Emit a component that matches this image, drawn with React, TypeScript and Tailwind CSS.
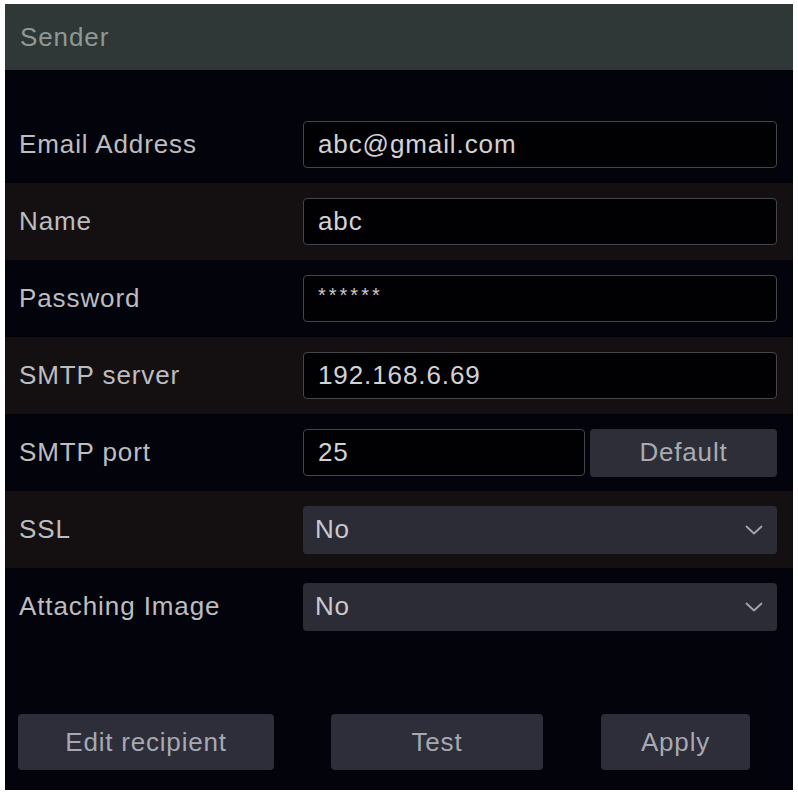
import React from "react";

const font = { fontFamily: '"Liberation Sans", Arial, sans-serif' };

function Chevron() {
  return (
    <svg width="18" height="10" viewBox="0 0 18 10" className="mr-[14px]">
      <path d="M1.5 1.5 L9 8.5 L16.5 1.5" fill="none" stroke="#a3a5ad" strokeWidth="1.8" strokeLinecap="round" strokeLinejoin="round" />
    </svg>
  );
}

function Row({ label, dark, children }: { label: string; dark?: boolean; children: React.ReactNode }) {
  return (
    <div className={`flex h-[77px] items-center pr-[16px] ${dark ? "bg-[#141012]" : ""}`}>
      <div className="w-[298px] shrink-0 pl-[14px] text-[26px] tracking-[0.9px] text-[#bdbdc0]">{label}</div>
      {children}
    </div>
  );
}

function TextBox({ value, small }: { value: string; small?: boolean }) {
  return (
    <div className="flex h-[47px] flex-1 items-center rounded-[4px] border-[1.5px] border-[#44454b] bg-[#010104] pl-[14px]">
      <span className={small ? "-mt-[8px] text-[20px] tracking-[3px] text-[#c9c9cc]" : "text-[26px] tracking-[0.9px] text-[#d2d2d5]"}>{value}</span>
    </div>
  );
}

function Select({ value }: { value: string }) {
  return (
    <div className="flex h-[48px] flex-1 items-center justify-between rounded-[4px] bg-[#2b2c35] pl-[12px]">
      <span className="text-[26px] tracking-[0.8px] text-[#c9c9cd]">{value}</span>
      <Chevron />
    </div>
  );
}

export default function App() {
  return (
    <div className="h-[792px] w-[798px] bg-white pl-[5px] pt-[4px]" style={font}>
      <div className="flex h-[786px] w-[788px] flex-col bg-[#03040b]">
        <div className="flex h-[66px] items-center bg-[#2f3836] pl-[15px] text-[26px] tracking-[0.9px] text-[#8f9895]">Sender</div>
        <div className="h-[36px]" />
        <Row label="Email Address">
          <TextBox value="abc@gmail.com" />
        </Row>
        <Row label="Name" dark>
          <TextBox value="abc" />
        </Row>
        <Row label="Password">
          <TextBox value="******" small />
        </Row>
        <Row label="SMTP server" dark>
          <TextBox value="192.168.6.69" />
        </Row>
        <Row label="SMTP port">
          <div className="flex flex-1 gap-[5px]">
            <div className="flex h-[47px] w-[282px] items-center rounded-[4px] border-[1.5px] border-[#44454b] bg-[#010104] pl-[14px]">
              <span className="text-[26px] tracking-[0.9px] text-[#d2d2d5]">25</span>
            </div>
            <div className="flex h-[48px] flex-1 items-center justify-center rounded-[4px] bg-[#2d2e37] text-[26px] tracking-[0.8px] text-[#a9abb2]">Default</div>
          </div>
        </Row>
        <Row label="SSL" dark>
          <Select value="No" />
        </Row>
        <Row label="Attaching Image">
          <Select value="No" />
        </Row>
        <div className="mt-[69px] flex h-[56px] items-stretch pl-[13px]">
          <div className="flex w-[256px] items-center justify-center rounded-[4px] bg-[#2d2e39] text-[26px] tracking-[0.8px] text-[#a6a9b1]">Edit recipient</div>
          <div className="ml-[57px] flex w-[212px] items-center justify-center rounded-[4px] bg-[#2d2e39] text-[26px] tracking-[0.8px] text-[#a6a9b1]">Test</div>
          <div className="ml-[58px] flex w-[149px] items-center justify-center rounded-[4px] bg-[#2d2e39] text-[26px] tracking-[0.8px] text-[#a6a9b1]">Apply</div>
        </div>
      </div>
    </div>
  );
}
